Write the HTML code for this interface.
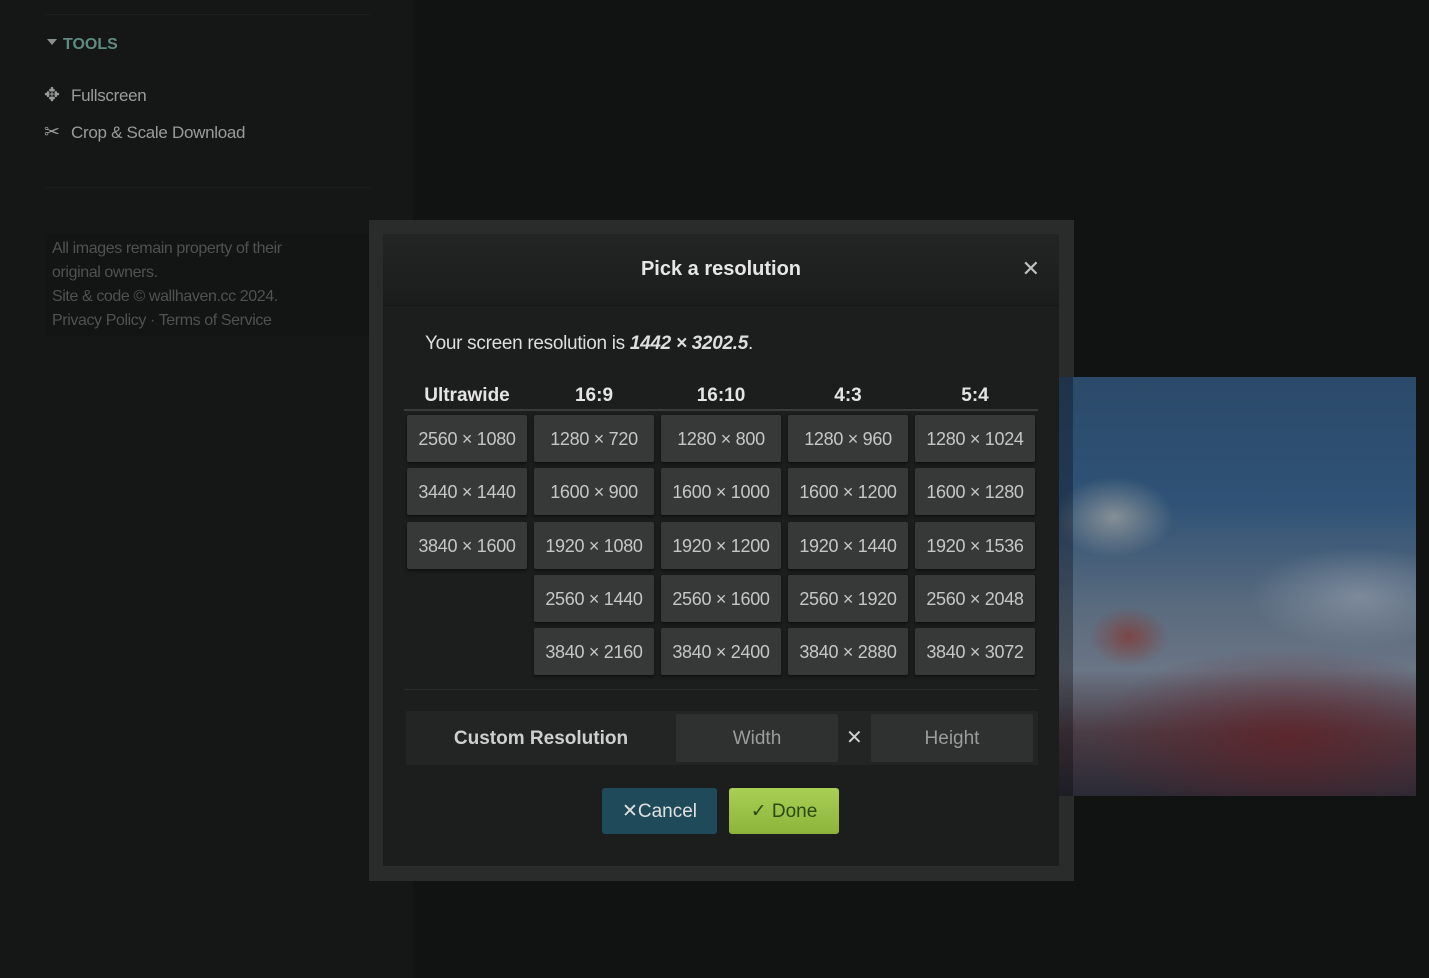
<!DOCTYPE html>
<html><head><meta charset="utf-8"><style>
*{margin:0;padding:0;box-sizing:border-box}
body{width:1429px;height:978px;background:#111212;font-family:"Liberation Sans","DejaVu Sans",sans-serif;position:relative;overflow:hidden}
.side{position:absolute;left:0;top:0;width:413px;height:978px;background:#151616}
.hr{position:absolute;left:45px;width:325px;height:1px;background:#1d1e1e}
.tools{position:absolute;left:47px;top:36px;color:#5f8b80;font-size:16px;font-weight:bold}
.tools:before{content:"";display:inline-block;border:5px solid transparent;border-top:6px solid #8a8f8f;margin-right:6px;vertical-align:-1px}
.item{position:absolute;left:44px;color:#9a9c9c;font-size:17px;letter-spacing:-0.3px}
.item span{display:inline-block;width:27px;font-size:19px}
.foot{position:absolute;left:45px;top:234px;width:325px;height:102px;background:#131414;color:#4f5252;font-size:16px;line-height:24px;padding:3px 7px;letter-spacing:-0.4px}
.img{position:absolute;left:1059px;top:377px;width:357px;height:419px;z-index:5;overflow:hidden;
background:
radial-gradient(ellipse 60px 40px at 55px 140px,rgba(200,190,175,.55),transparent),
radial-gradient(ellipse 40px 30px at 70px 260px,rgba(130,60,55,.8),transparent),
radial-gradient(ellipse 110px 50px at 300px 220px,rgba(150,160,175,.6),transparent),
radial-gradient(ellipse 200px 90px at 230px 360px,rgba(100,30,35,.7),transparent),
linear-gradient(180deg,#2c4a6a 0%,#2f5276 30%,#5a6b7e 55%,#6a7585 70%,#4a3c45 85%,#2a2a35 100%)}
.img .ov{position:absolute;left:0;top:0;width:14px;height:100%;background:rgba(0,0,0,.3)}
.frame{position:absolute;left:369px;top:220px;width:705px;height:661px;background:#2a2b2b}
.dlg{position:absolute;left:383px;top:234px;width:676px;height:632px;background:#1c1d1d}
.hd{height:72px;background:linear-gradient(#232424,#1b1c1c);border-bottom:1px solid #161717;text-align:center;color:#e6e6e6;font-size:20px;font-weight:bold;line-height:70px;position:relative}
.hd .x{position:absolute;right:19px;top:0;font-size:22px;color:#c0c0c0}
.res{position:absolute;left:42px;top:99px;color:#dedede;font-size:19px;letter-spacing:-0.3px}
.th{position:absolute;top:151px;width:120px;text-align:center;color:#e4e4e4;font-size:19px;font-weight:bold}
.line{position:absolute;left:21px;top:175px;width:634px;height:2px;background:#3a3b3b}
.b{position:absolute;width:120px;height:47px;background:#373838;box-shadow:0 2px 3px rgba(0,0,0,.5);color:#c6c6c6;font-size:18px;text-align:center;line-height:49px;border-radius:2px;letter-spacing:-0.3px}
.line2{position:absolute;left:21px;top:455px;width:634px;height:1px;background:#2a2b2b}
.cust{position:absolute;left:23px;top:477px;width:632px;height:54px;background:#232424}
.cust .l{position:absolute;left:0;top:0;width:270px;line-height:56px;text-align:center;color:#cfcfcf;font-weight:bold;font-size:19px}
.inp{position:absolute;top:3px;height:48px;background:#2f3030;color:#9c9c9c;font-size:19px;text-align:center;line-height:50px;border-radius:2px}
.cx{position:absolute;left:440px;top:0;line-height:54px;color:#cfcfcf;font-size:20px;font-weight:bold}
.btn{position:absolute;top:554px;height:46px;line-height:48px;font-size:19px;text-align:center;border-radius:3px}
</style></head><body>
<div class="side">
<div class="hr" style="top:14px"></div>
<div class="tools">TOOLS</div>
<div class="item" style="top:84px"><span>✥</span>Fullscreen</div>
<div class="item" style="top:121px"><span>✂</span>Crop &amp; Scale Download</div>
<div class="hr" style="top:187px"></div>
<div class="foot">All images remain property of their<br>original owners.<br>Site &amp; code © wallhaven.cc 2024.<br>Privacy Policy · Terms of Service</div>
</div>
<div class="frame"></div>
<div class="img"><div class="ov"></div></div>
<div class="dlg">
<div class="hd">Pick a resolution<span class="x">✕</span></div>
<div class="res">Your screen resolution is <b><i>1442 × 3202.5</i></b>.</div>
<div class="th" style="left:24px">Ultrawide</div>
<div class="th" style="left:151px">16:9</div>
<div class="th" style="left:278px">16:10</div>
<div class="th" style="left:405px">4:3</div>
<div class="th" style="left:532px">5:4</div>
<div class="line"></div>
<div class="b" style="left:24px;top:181px">2560 × 1080</div>
<div class="b" style="left:151px;top:181px">1280 × 720</div>
<div class="b" style="left:278px;top:181px">1280 × 800</div>
<div class="b" style="left:405px;top:181px">1280 × 960</div>
<div class="b" style="left:532px;top:181px">1280 × 1024</div>
<div class="b" style="left:24px;top:234px">3440 × 1440</div>
<div class="b" style="left:151px;top:234px">1600 × 900</div>
<div class="b" style="left:278px;top:234px">1600 × 1000</div>
<div class="b" style="left:405px;top:234px">1600 × 1200</div>
<div class="b" style="left:532px;top:234px">1600 × 1280</div>
<div class="b" style="left:24px;top:288px">3840 × 1600</div>
<div class="b" style="left:151px;top:288px">1920 × 1080</div>
<div class="b" style="left:278px;top:288px">1920 × 1200</div>
<div class="b" style="left:405px;top:288px">1920 × 1440</div>
<div class="b" style="left:532px;top:288px">1920 × 1536</div>
<div class="b" style="left:151px;top:341px">2560 × 1440</div>
<div class="b" style="left:278px;top:341px">2560 × 1600</div>
<div class="b" style="left:405px;top:341px">2560 × 1920</div>
<div class="b" style="left:532px;top:341px">2560 × 2048</div>
<div class="b" style="left:151px;top:394px">3840 × 2160</div>
<div class="b" style="left:278px;top:394px">3840 × 2400</div>
<div class="b" style="left:405px;top:394px">3840 × 2880</div>
<div class="b" style="left:532px;top:394px">3840 × 3072</div>
<div class="line2"></div>
<div class="cust"><div class="l">Custom Resolution</div>
<div class="inp" style="left:270px;width:162px">Width</div>
<div class="cx">✕</div>
<div class="inp" style="left:465px;width:162px">Height</div></div>
<div class="btn" style="left:219px;width:115px;background:#1f4a5a;color:#e0e0e0">✕Cancel</div>
<div class="btn" style="left:346px;width:110px;background:linear-gradient(#a9cf55,#8db43a);color:#264a10">✓ Done</div>
</div>
</body></html>
